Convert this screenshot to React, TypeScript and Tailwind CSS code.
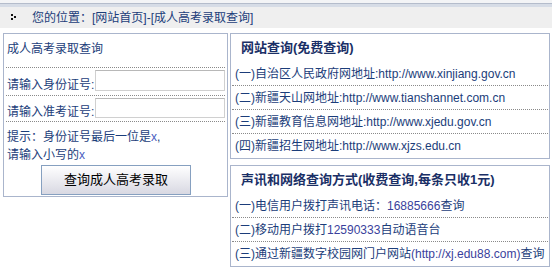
const font = { fontFamily: '"Liberation Sans", Arial, "Noto Sans CJK SC", sans-serif' };

const Row = ({ children, last }: { children: React.ReactNode; last?: boolean }) => (
  <div
    className={`flex h-6 items-center whitespace-nowrap pl-[3px] ${
      last ? "" : "border-b border-dotted border-[#8a8a8a]"
    }`}
  >
    {children}
  </div>
);

const Panel = ({ title, children }: { title: string; children: React.ReactNode }) => (
  <div className="border border-[#aab5cc] bg-white px-px">
    <div className="flex h-[28px] items-center pl-[9px] text-[13px] font-bold text-[#1a2f66]">
      {title}
    </div>
    {children}
  </div>
);

const Num = ({ children }: { children: React.ReactNode }) => (
  <span className="text-[#3a3f9c]">{children}</span>
);

export default function App() {
  return (
    <div className="h-[275px] w-[552px] bg-white text-[12px] text-[#1b3d7a]" style={font}>
      {/* top strip */}
      <div className="h-[3px] bg-[#f3f4f6]" />
      <div className="h-px bg-[#b4bccb]" />
      <div className="h-[3px] bg-[#d6dce6]" />
      <div className="flex h-[21px] items-center bg-[#efefef]">
        <svg width="6" height="7" viewBox="0 0 6 7" className="ml-[11px]">
          <rect x="0" y="0" width="2" height="2" fill="#111" />
          <rect x="3" y="2" width="2" height="2" fill="#111" />
          <rect x="0" y="4" width="2" height="2" fill="#111" />
        </svg>
        <span className="ml-[15px]">您的位置：</span>
        <span>[网站首页]-[成人高考录取查询]</span>
      </div>

      <div className="mt-[5px] flex gap-[2px] pl-[3px]">
        {/* left panel */}
        <div className="h-[164px] w-[225px] border border-[#aab5cc] bg-white px-[2px]">
          <div className="flex h-[34px] items-center border-b border-dotted border-[#8a8a8a] pb-[4px] pl-[1px]">
            成人高考录取查询
          </div>
          <div className="flex h-[28px] items-end border-b border-dotted border-[#8a8a8a] pb-[4px] pl-[1px]">
            <span className="leading-none">请输入身份证号:</span>
            <div className="ml-px h-[21px] flex-1 border border-[#d0d0d0] border-t-[#b8b8b8] bg-white" />
          </div>
          <div className="flex h-[26px] items-end border-b border-dotted border-[#8a8a8a] pb-[3px] pl-[1px]">
            <span className="leading-none">请输入准考证号:</span>
            <div className="ml-px h-[20px] flex-1 border border-[#d0d0d0] border-t-[#b8b8b8] bg-white" />
          </div>
          <div className="pl-[1px] pt-[6px] leading-[18px]">
            <div>
              提示：身份证号最后一位是<span className="text-[#4a5cc0]">x</span>,
            </div>
            <div>
              请输入小写的<span className="text-[#4a5cc0]">x</span>
            </div>
          </div>
          <button
            className="ml-[35px] mt-px h-[30px] w-[150px] border border-[#86a0c0] bg-gradient-to-b from-white to-[#d8d8e2] text-[13px] text-black"
            style={font}
          >
            查询成人高考录取
          </button>
        </div>

        {/* right column */}
        <div className="flex w-[320px] flex-col gap-[6px]">
          <Panel title="网站查询(免费查询)">
            <Row>(一)自治区人民政府网地址:http://www.xinjiang.gov.cn</Row>
            <Row>(二)新疆天山网地址:http://www.tianshannet.com.cn</Row>
            <Row>(三)新疆教育信息网地址:http://www.xjedu.gov.cn</Row>
            <Row last>(四)新疆招生网地址:http://www.xjzs.edu.cn</Row>
          </Panel>
          <Panel title="声讯和网络查询方式(收费查询,每条只收1元)">
            <Row>
              (一)电信用户拨打声讯电话：<Num>16885666</Num>查询
            </Row>
            <Row>
              (二)移动用户拨打<Num>12590333</Num>自动语音台
            </Row>
            <Row last>
              (三)通过新疆数字校园网门户网站<Num>(http://xj.edu88.com)</Num>查询
            </Row>
          </Panel>
        </div>
      </div>
    </div>
  );
}
